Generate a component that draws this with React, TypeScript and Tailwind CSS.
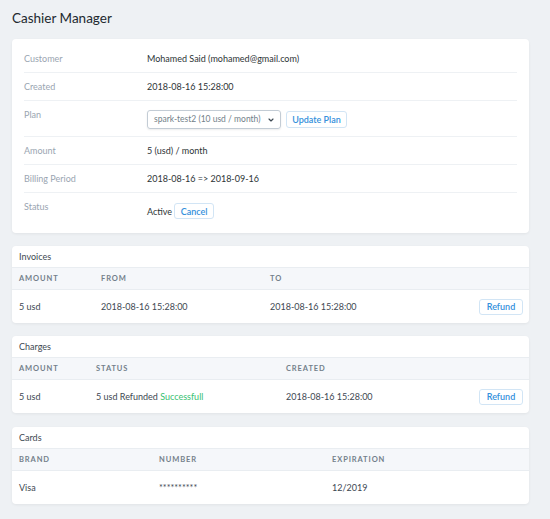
import { ChevronDown } from "lucide-react";

const font = { fontFamily: "Lato, 'Open Sans', sans-serif" };

const DetailRow = ({ label, children, last }: { label: string; children: React.ReactNode; last?: boolean }) => (
  <div className={`flex items-start py-[7px] leading-[13px] ${last ? "" : "border-b border-[#eef1f4]"}`}>
    <div className="w-[123px] shrink-0 text-[#9aa5b1]">{label}</div>
    <div className="flex-1 text-[#2d3436]">{children}</div>
  </div>
);

const OutlineButton = ({ children, className = "" }: { children: React.ReactNode; className?: string }) => (
  <button className={`border border-[#d2e5f5] rounded-[3px] bg-white text-[#3490dc] font-semibold leading-[13px] whitespace-nowrap ${className}`}>
    {children}
  </button>
);

const TableCard = ({
  title,
  cols,
  headers,
  cells,
  action,
}: {
  title: string;
  cols: string;
  headers: string[];
  cells: React.ReactNode[];
  action?: boolean;
}) => (
  <div className="bg-white rounded-[4px] shadow-[0_1px_3px_rgba(0,0,0,0.06)] overflow-hidden">
    <div className="h-[22px] flex items-center px-[7px] text-[#3d4852] border-b border-[#e9edf1]">{title}</div>
    <div className={`grid ${cols} h-[22px] items-center bg-[#f5f7fa] border-b border-[#e9edf1] px-[7px] text-[7.5px] font-bold tracking-[0.12em] uppercase text-[#737f8a]`}>
      {headers.map((h) => (
        <div key={h}>{h}</div>
      ))}
      {action && <div />}
    </div>
    <div className={`grid ${cols} h-[33px] items-center pl-[7px] pr-[6px] text-[#3d4852]`}>
      {cells.map((c, i) => (
        <div key={i}>{c}</div>
      ))}
      {action && (
        <div className="flex justify-end">
          <OutlineButton className="h-[16px] w-[44px]">Refund</OutlineButton>
        </div>
      )}
    </div>
  </div>
);

export default function App() {
  return (
    <div className="min-h-[519px] bg-[#eef1f4] pt-2 pb-4 text-[9px]" style={font}>
      <h1 className="ml-3 text-[13.5px] leading-[20px] text-[#22292f] mb-[11px]">Cashier Manager</h1>

      <div className="ml-3 w-[517px] flex flex-col gap-[13px]">
        <div className="bg-white rounded-[4px] shadow-[0_1px_3px_rgba(0,0,0,0.06)] px-3 pt-[6px] pb-[7px]">
          <DetailRow label="Customer">Mohamed Said (mohamed@gmail.com)</DetailRow>
          <DetailRow label="Created">2018-08-16 15:28:00</DetailRow>
          <DetailRow label="Plan">
            <div className="flex items-center gap-[5px] mt-[2px]">
              <div className="w-[134px] h-[19px] border border-[#c3ccd5] rounded-[3px] shadow-[0_1px_2px_rgba(0,0,0,0.08)] flex items-center justify-between pl-[6px] pr-[5px] text-[8.5px] text-[#737f8a] whitespace-nowrap">
                <span>spark-test2 (10 usd / month)</span>
                <ChevronDown size={8} strokeWidth={3.5} className="text-[#3d4852]" />
              </div>
              <OutlineButton className="h-[17px] w-[61px]">Update Plan</OutlineButton>
            </div>
          </DetailRow>
          <DetailRow label="Amount">5 (usd) / month</DetailRow>
          <DetailRow label="Billing Period">2018-08-16 =&gt; 2018-09-16</DetailRow>
          <DetailRow label="Status" last>
            <div className="flex items-center gap-[2px] mt-[3px]">
              <span>Active</span>
              <OutlineButton className="h-[16px] w-[40px] font-normal">Cancel</OutlineButton>
            </div>
          </DetailRow>
        </div>

        <TableCard
          title="Invoices"
          cols="grid-cols-[82px_169px_1fr_auto]"
          headers={["Amount", "From", "To"]}
          cells={["5 usd", "2018-08-16 15:28:00", "2018-08-16 15:28:00"]}
          action
        />

        <TableCard
          title="Charges"
          cols="grid-cols-[77px_190px_1fr_auto]"
          headers={["Amount", "Status", "Created"]}
          cells={[
            "5 usd",
            <span>
              5 usd Refunded <span className="text-[#38c172]">Successfull</span>
            </span>,
            "2018-08-16 15:28:00",
          ]}
          action
        />

        <div className="mt-px">
          <TableCard
            title="Cards"
            cols="grid-cols-[140px_173px_1fr]"
            headers={["Brand", "Number", "Expiration"]}
            cells={["Visa", "**********", "12/2019"]}
          />
        </div>
      </div>
    </div>
  );
}
